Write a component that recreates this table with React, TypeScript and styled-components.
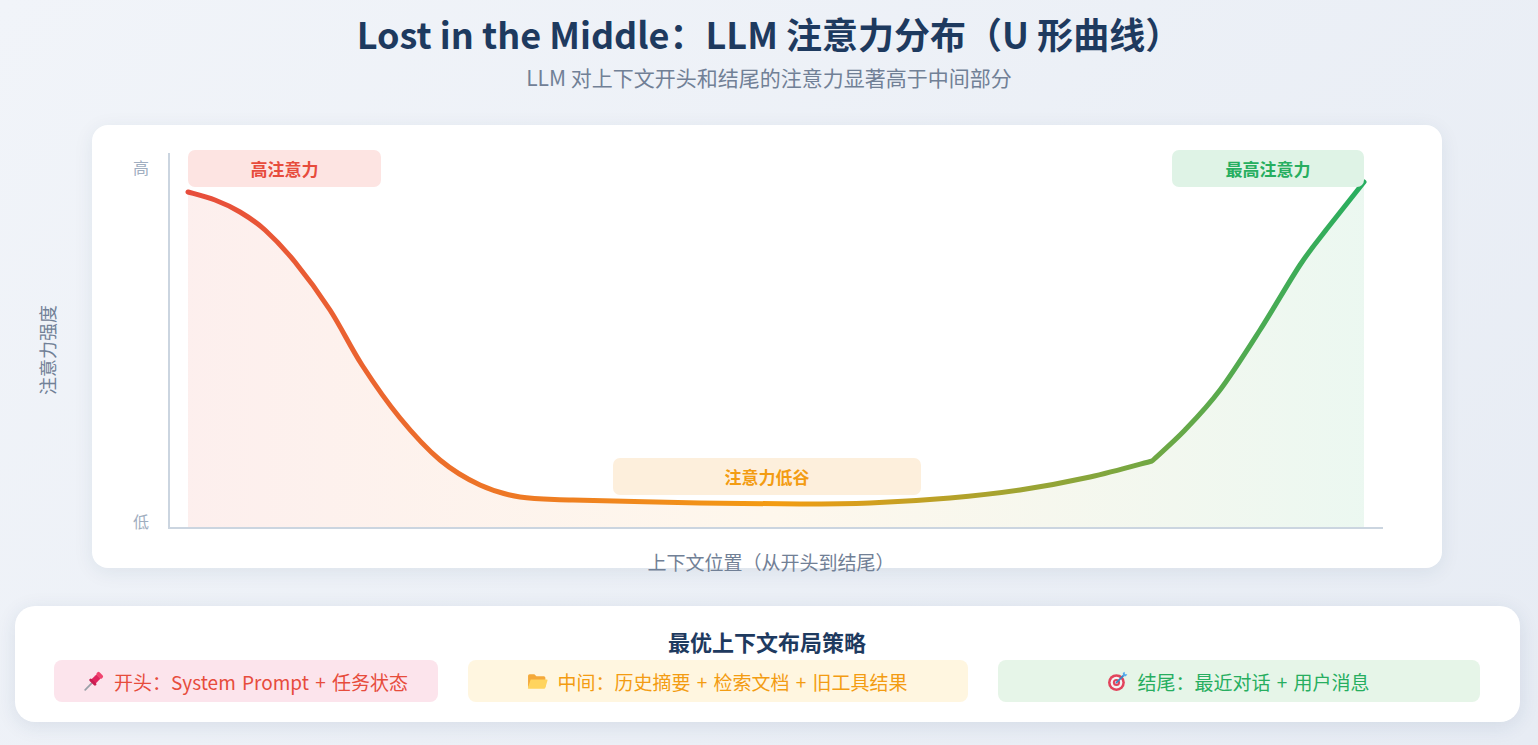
import React from 'react';
import styled, { createGlobalStyle } from 'styled-components';

const GlobalStyle = createGlobalStyle`
  html, body {
    margin: 0;
    padding: 0;
  }
  body {
    font-family: "Noto Sans CJK SC", "Noto Sans", sans-serif;
    background: linear-gradient(135deg, #f1f4f9 0%, #e7ecf4 100%);
    min-height: 745px;
  }
`;

type Pt = [number, number];

// left part of the curve: high start, long flat valley
const leftPts: Pt[] = [
  [96, 67], [123, 75], [148, 87], [173, 105], [203, 137], [238, 185],
  [270, 240], [308, 293], [348, 335], [388, 360], [428, 372], [481, 375],
  [608, 378], [708, 379], [778, 378], [858, 373], [928, 365], [998, 352], [1060, 336],
];
// right part: sharp climb to the end
const rightPts: Pt[] = [
  [1060, 336], [1093, 305], [1128, 265], [1168, 205], [1208, 140], [1234, 105],
];
const endPt: Pt = [1272, 57];

const smooth = (pts: Pt[]) => {
  let d = '';
  for (let i = 0; i < pts.length - 1; i++) {
    const p0 = pts[i - 1] || pts[i];
    const p1 = pts[i];
    const p2 = pts[i + 1];
    const p3 = pts[i + 2] || p2;
    const c1x = p1[0] + (p2[0] - p0[0]) / 6;
    const c1y = p1[1] + (p2[1] - p0[1]) / 6;
    const c2x = p2[0] - (p3[0] - p1[0]) / 6;
    const c2y = p2[1] - (p3[1] - p1[1]) / 6;
    d += ` C ${c1x} ${c1y}, ${c2x} ${c2y}, ${p2[0]} ${p2[1]}`;
  }
  return d;
};

const curve = `M ${leftPts[0][0]} ${leftPts[0][1]}${smooth(leftPts)}${smooth(rightPts)} L ${endPt[0]} ${endPt[1]}`;
const area = `${curve} L ${endPt[0]} 403 L ${leftPts[0][0]} 403 Z`;

const Page = styled.div`
  padding-top: 12px;
  display: flex;
  flex-direction: column;
  align-items: center;
`;

const Title = styled.h1`
  margin: 0;
  font-size: 36px;
  line-height: 42px;
  font-weight: 700;
  color: #1e3a5f;
  text-align: center;
`;

const Subtitle = styled.p`
  margin: 10px 0 0;
  font-size: 21px;
  line-height: 26px;
  color: #718096;
  text-align: center;
`;

const ChartCard = styled.div`
  position: relative;
  margin: 35px 4px 0 0;
  width: 1350px;
  height: 443px;
  background: #ffffff;
  border-radius: 16px;
  box-shadow: 0 4px 20px rgba(30, 58, 95, 0.08);
`;

const ChartSvg = styled.svg`
  display: block;
`;

const Tag = styled.div<{ $bg: string; $fg: string }>`
  position: absolute;
  height: 37px;
  display: flex;
  align-items: center;
  justify-content: center;
  border-radius: 7px;
  background: ${(p) => p.$bg};
  color: ${(p) => p.$fg};
  font-size: 17px;
  font-weight: 700;
`;

const YTitle = styled.div`
  position: absolute;
  left: -45px;
  top: 225px;
  transform: translate(-50%, -50%) rotate(-90deg);
  white-space: nowrap;
  font-size: 18px;
  color: #718096;
`;

const XTitle = styled.div`
  position: absolute;
  left: 679px;
  top: 436px;
  transform: translate(-50%, -50%);
  white-space: nowrap;
  font-size: 19px;
  color: #718096;
`;

const StrategyCard = styled.div`
  margin: 38px 4px 0 0;
  width: 1505px;
  box-sizing: border-box;
  padding: 21px 39px 20px 39px;
  background: #ffffff;
  border-radius: 20px;
  box-shadow: 0 4px 20px rgba(30, 58, 95, 0.1);
`;

const StrategyTitle = styled.h2`
  margin: 0 0 4px;
  font-size: 22px;
  line-height: 29px;
  font-weight: 700;
  color: #1e3a5f;
  text-align: center;
`;

const Row = styled.div`
  display: grid;
  grid-template-columns: 384px 500px 482px;
  gap: 30px;
`;

const Item = styled.div<{ $bg: string; $fg: string }>`
  height: 42px;
  display: flex;
  align-items: center;
  justify-content: center;
  gap: 9px;
  border-radius: 8px;
  background: ${(p) => p.$bg};
  color: ${(p) => p.$fg};
  font-size: 19px;
  word-spacing: 2px;
  svg {
    flex: none;
  }
`;

const PinIcon = () => (
  <svg width="22" height="22" viewBox="0 0 20 20">
    <line x1="2" y1="18" x2="8" y2="12" stroke="#9aa0a8" strokeWidth="1.6" strokeLinecap="round" />
    <g transform="rotate(45 12 8)">
      <rect x="9.3" y="5" width="5.4" height="7" rx="1" fill="#e0245e" />
      <rect x="8" y="11" width="8" height="2.6" rx="1.2" fill="#c81d50" />
      <rect x="8.6" y="1.6" width="6.8" height="3.8" rx="1.6" fill="#f0446f" />
    </g>
  </svg>
);

const FolderIcon = () => (
  <svg width="21" height="19" viewBox="0 0 20 18">
    <path d="M1 3.5 Q1 2 2.5 2 H7 L9 4 H16 Q17.5 4 17.5 5.5 V14 H1 Z" fill="#f4a93a" />
    <path d="M3.5 7 H19 Q19.8 7 19.5 8 L17.5 15 Q17.2 16 16.2 16 H1.5 Q0.6 16 0.9 15 Z" fill="#ffd45e" />
  </svg>
);

const TargetIcon = () => (
  <svg width="21" height="21" viewBox="0 0 20 20">
    <circle cx="9" cy="11" r="8" fill="#e2445c" />
    <circle cx="9" cy="11" r="5.6" fill="#f4f4f4" />
    <circle cx="9" cy="11" r="3.4" fill="#e2445c" />
    <circle cx="9" cy="11" r="1.4" fill="#f4f4f4" />
    <line x1="9" y1="11" x2="16.5" y2="3.5" stroke="#3b88c3" strokeWidth="1.8" strokeLinecap="round" />
    <path d="M15 2 L16.8 0.6 L17 3 L19.4 3.2 L18 5 L15.6 5 Z" fill="#55acee" />
  </svg>
);

export default function App() {
  return (
    <>
      <GlobalStyle />
      <Page>
        <Title>Lost in the Middle：LLM 注意力分布（U 形曲线）</Title>
        <Subtitle>LLM 对上下文开头和结尾的注意力显著高于中间部分</Subtitle>

        <ChartCard>
          <ChartSvg width="1350" height="443" viewBox="0 0 1350 443">
            <defs>
              <linearGradient id="lineGrad" gradientUnits="userSpaceOnUse" x1="96" y1="0" x2="1272" y2="0">
                <stop offset="0" stopColor="#e74c3c" />
                <stop offset="0.5" stopColor="#f39c12" />
                <stop offset="1" stopColor="#27ae60" />
              </linearGradient>
              <linearGradient id="fillGrad" gradientUnits="userSpaceOnUse" x1="96" y1="0" x2="1272" y2="0">
                <stop offset="0" stopColor="#e74c3c" stopOpacity="0.09" />
                <stop offset="0.5" stopColor="#f39c12" stopOpacity="0.08" />
                <stop offset="1" stopColor="#27ae60" stopOpacity="0.09" />
              </linearGradient>
            </defs>
            <path d={area} fill="url(#fillGrad)" />
            <line x1="77" y1="28" x2="77" y2="403" stroke="#cbd5e0" strokeWidth="2" />
            <line x1="76" y1="403" x2="1291" y2="403" stroke="#cbd5e0" strokeWidth="2" />
            <path d={curve} fill="none" stroke="url(#lineGrad)" strokeWidth="5" strokeLinecap="round" strokeLinejoin="round" />
            <text x="49" y="49" textAnchor="middle" fontSize="16" fill="#a0aec0" fontFamily="Noto Sans CJK SC, sans-serif">高</text>
            <text x="49" y="403" textAnchor="middle" fontSize="16" fill="#a0aec0" fontFamily="Noto Sans CJK SC, sans-serif">低</text>
          </ChartSvg>

          <Tag $bg="#fde4e2" $fg="#e74c3c" style={{ left: 96, top: 25, width: 193 }}>高注意力</Tag>
          <Tag $bg="#fdefdc" $fg="#f39c12" style={{ left: 521, top: 333, width: 308 }}>注意力低谷</Tag>
          <Tag $bg="#dff3e6" $fg="#27ae60" style={{ left: 1080, top: 25, width: 192 }}>最高注意力</Tag>

          <YTitle>注意力强度</YTitle>
          <XTitle>上下文位置（从开头到结尾）</XTitle>
        </ChartCard>

        <StrategyCard>
          <StrategyTitle>最优上下文布局策略</StrategyTitle>
          <Row>
            <Item $bg="#fce4ec" $fg="#e74c3c">
              <PinIcon />
              开头：System Prompt + 任务状态
            </Item>
            <Item $bg="#fff6e0" $fg="#f39c12">
              <FolderIcon />
              中间：历史摘要 + 检索文档 + 旧工具结果
            </Item>
            <Item $bg="#e6f5e8" $fg="#27ae60">
              <TargetIcon />
              结尾：最近对话 + 用户消息
            </Item>
          </Row>
        </StrategyCard>
      </Page>
    </>
  );
}
